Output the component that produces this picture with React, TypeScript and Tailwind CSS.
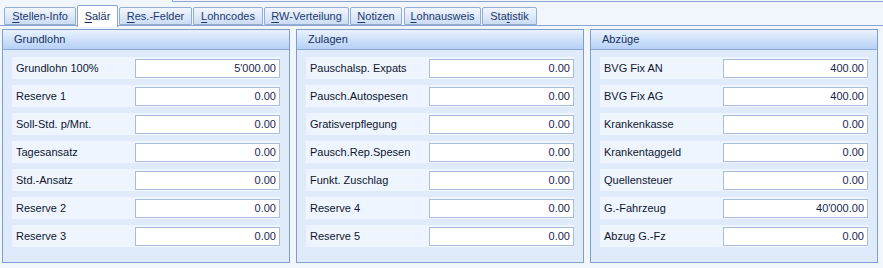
import React from "react";

/* Personal-Stammdaten: Salär tab with three panels (Grundlohn, Zulagen, Abzüge) */

type Tab = { label: string; key: number; left: number; width: number; active?: boolean };

const tabs: Tab[] = [
  { label: "Stellen-Info", key: 0, left: 4, width: 72 },
  { label: "Salär", key: 0, left: 77, width: 41, active: true },
  { label: "Res.-Felder", key: 0, left: 119, width: 73 },
  { label: "Lohncodes", key: 0, left: 193, width: 70 },
  { label: "RW-Verteilung", key: 0, left: 264, width: 85 },
  { label: "Notizen", key: 0, left: 350, width: 52 },
  { label: "Lohnausweis", key: 0, left: 404, width: 77 },
  { label: "Statistik", key: 3, left: 482, width: 55 },
];

const panels: { title: string; rows: [string, string][] }[] = [
  {
    title: "Grundlohn",
    rows: [
      ["Grundlohn 100%", "5'000.00"],
      ["Reserve 1", "0.00"],
      ["Soll-Std. p/Mnt.", "0.00"],
      ["Tagesansatz", "0.00"],
      ["Std.-Ansatz", "0.00"],
      ["Reserve 2", "0.00"],
      ["Reserve 3", "0.00"],
    ],
  },
  {
    title: "Zulagen",
    rows: [
      ["Pauschalsp. Expats", "0.00"],
      ["Pausch.Autospesen", "0.00"],
      ["Gratisverpflegung", "0.00"],
      ["Pausch.Rep.Spesen", "0.00"],
      ["Funkt. Zuschlag", "0.00"],
      ["Reserve 4", "0.00"],
      ["Reserve 5", "0.00"],
    ],
  },
  {
    title: "Abzüge",
    rows: [
      ["BVG Fix AN", "400.00"],
      ["BVG Fix AG", "400.00"],
      ["Krankenkasse", "0.00"],
      ["Krankentaggeld", "0.00"],
      ["Quellensteuer", "0.00"],
      ["G.-Fahrzeug", "40'000.00"],
      ["Abzug G.-Fz", "0.00"],
    ],
  },
];

function TabLabel({ label, k }: { label: string; k: number }) {
  return (
    <span>
      {label.slice(0, k)}
      <span className="underline underline-offset-2">{label[k]}</span>
      {label.slice(k + 1)}
    </span>
  );
}

function Panel({ title, rows }: { title: string; rows: [string, string][] }) {
  return (
    <div className="w-[288px] h-[234px] border border-[#7f9ecb] bg-[#dfeafb] flex flex-col">
      <div className="h-[20px] border-b border-[#8aa8d3] bg-gradient-to-b from-[#eaf2fe] to-[#b6d1f6] pl-[11px] flex items-center text-[#15305e]">
        {title}
      </div>
      <div className="flex flex-col gap-[6px] pt-[7px] px-[9px]">
        {rows.map(([label, value]) => (
          <div key={label} className="h-[22px] bg-[#eff5fe] flex items-center">
            <span className="flex-1 pl-[4px] text-[#0d1530]">{label}</span>
            <div className="w-[145px] h-[19px] border border-[#a8bedc] bg-white text-right pr-[3px] leading-[17px] text-[#1a1f4f]">
              {value}
            </div>
          </div>
        ))}
      </div>
    </div>
  );
}

export default function App() {
  return (
    <div className="w-[883px] h-[268px] bg-[#f1f6fd] overflow-hidden font-['Liberation_Sans',Arial,sans-serif] text-[11px]">
      {/* bottom edge of the control above */}
      <div className="h-[2px] ml-[172px] border-l border-b border-[#8aa6cf]" />

      {/* tab strip */}
      <div className="relative h-[24px] border-b border-[#8aa6cf]">
        {tabs.map((t) =>
          t.active ? (
            <div
              key={t.label}
              className="absolute top-[3px] h-[21px] border border-b-0 border-[#8aa6cf] rounded-t-[2px] bg-white flex items-center justify-center text-[#15305e] z-10"
              style={{ left: t.left, width: t.width, height: 22 }}
            >
              <TabLabel label={t.label} k={t.key} />
            </div>
          ) : (
            <div
              key={t.label}
              className="absolute top-[5px] h-[18px] border border-[#93aed5] rounded-t-[2px] bg-gradient-to-b from-[#f3f7fd] to-[#cbdcf4] flex items-center justify-center text-[#1c3a70]"
              style={{ left: t.left, width: t.width }}
            >
              <TabLabel label={t.label} k={t.key} />
            </div>
          )
        )}
      </div>

      {/* panels */}
      <div className="flex gap-[6px] pl-[2px] pt-[3px]">
        {panels.map((p) => (
          <Panel key={p.title} title={p.title} rows={p.rows} />
        ))}
      </div>
    </div>
  );
}
